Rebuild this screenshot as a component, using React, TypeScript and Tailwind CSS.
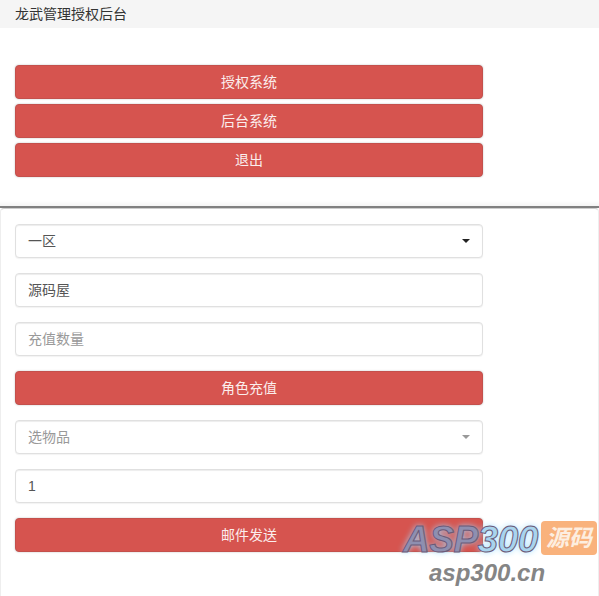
const font = { fontFamily: '"Liberation Sans", "Noto Sans CJK SC", sans-serif' };

function RedButton({ label }: { label: string }) {
  return (
    <button className="h-[34px] w-full rounded border border-[#c4504c] bg-[#d6544f] text-sm text-[#fbeeed] shadow-[0_0_2px_rgba(0,0,0,0.25)]">
      {label}
    </button>
  );
}

function Field({ text, muted, caret }: { text: string; muted?: boolean; caret?: boolean }) {
  return (
    <div
      className={`flex h-[34px] w-full items-center justify-between rounded border border-[#e0e0e0] bg-white pl-3 pr-3 text-sm shadow-[inset_0_1px_1px_rgba(0,0,0,0.075),0_1px_1px_rgba(0,0,0,0.05)] ${
        muted ? "text-[#999]" : "text-[#555]"
      }`}
    >
      <span>{text}</span>
      {caret && (
        <span
          className={`h-0 w-0 border-x-4 border-t-4 border-x-transparent ${
            muted ? "border-t-[#999]" : "border-t-[#222]"
          }`}
        />
      )}
    </div>
  );
}

export default function App() {
  return (
    <div className="relative h-[596px] w-[599px] overflow-hidden bg-white" style={font}>
      <div className="h-[208px] border-b-2 border-[#808080] bg-white shadow-[inset_0_-6px_5px_-4px_rgba(0,0,0,0.06)]">
        <div className="flex h-[28px] items-center bg-[#f5f5f5] pl-[15px] text-sm text-[#333]">
          龙武管理授权后台
        </div>
        <div className="flex w-[483px] flex-col gap-[5px] pl-[15px] pt-[37px]">
          <RedButton label="授权系统" />
          <RedButton label="后台系统" />
          <RedButton label="退出" />
        </div>
      </div>

      <div className="h-[388px] rounded-t border-x border-t border-x-[#eeeeee] border-t-[#cccccc]">
        <div className="flex w-[482px] flex-col gap-[15px] pl-[14px] pt-[15px]">
          <Field text="一区" caret />
          <Field text="源码屋" />
          <Field text="充值数量" muted />
          <RedButton label="角色充值" />
          <Field text="选物品" muted caret />
          <Field text="1" />
          <RedButton label="邮件发送" />
        </div>
      </div>

      {/* watermark over the page */}
      <div className="absolute left-[403px] top-[517px] h-[70px] w-[196px]">
        <span
          className="absolute left-0 top-[1px] text-[37px] font-bold italic leading-[44px] tracking-[-0.5px] text-[#8e8fb0]"
          style={{
            fontFamily: '"Liberation Sans", sans-serif',
            WebkitTextStroke: "1px #6b5a78",
            textShadow: "0 0 6px #9fdcff",
          }}
        >
          ASP
          <span className="text-[#a8d4ee]">300</span>
        </span>
        <span className="absolute left-[138px] top-[4px] flex h-[34px] w-[56px] items-center justify-center rounded bg-[#f9b27c] text-[23px] font-bold italic text-[#fdeee0]">
          源码
        </span>
        <span
          className="absolute left-[26px] top-[43px] text-[24px] font-bold italic leading-[26px] text-[#858585]"
          style={{ fontFamily: '"Liberation Sans", sans-serif' }}
        >
          asp300.cn
        </span>
      </div>
    </div>
  );
}
